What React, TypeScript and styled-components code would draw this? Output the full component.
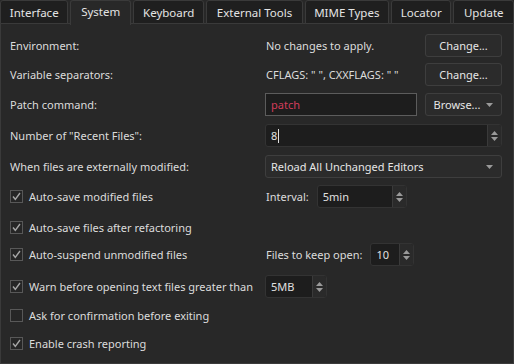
import React from 'react';
import styled, { createGlobalStyle } from 'styled-components';

const Global = createGlobalStyle`
  html, body {
    margin: 0;
    padding: 0;
    background: #282828;
  }
  body {
    font-family: 'Noto Sans', 'DejaVu Sans', sans-serif;
    font-size: 11px;
    color: #dcdcdc;
  }
`;

const Window = styled.div`
  width: 514px;
  height: 364px;
  display: flex;
  flex-direction: column;
  overflow: hidden;
  background: #282828;
`;

const TabBar = styled.div`
  display: flex;
  height: 24px;
  flex: none;
`;

const Tab = styled.div<{ active?: boolean; width: number }>`
  box-sizing: border-box;
  width: ${({ width }) => width}px;
  height: ${({ active }) => (active ? 25 : 24)}px;
  margin-right: 2px;
  display: flex;
  align-items: center;
  justify-content: center;
  font-size: 11.5px;
  padding-bottom: ${({ active }) => (active ? 3 : 0)}px;
  background: ${({ active }) => (active ? '#282828' : '#1f1f1f')};
  border: 1px solid #3a3a3a;
  border-bottom: ${({ active }) => (active ? 'none' : '1px solid #3a3a3a')};
  border-radius: 3px 3px 0 0;
  color: #e4e4e4;
  white-space: nowrap;
  position: relative;
  z-index: ${({ active }) => (active ? 2 : 1)};
  &:last-child {
    margin-right: 0;
  }
`;

const Pane = styled.div`
  flex: 1;
  box-sizing: border-box;
  margin-top: -1px;
  border: 1px solid #3a3a3a;
  padding: 10px 11px 0 9px;
  display: flex;
  flex-direction: column;
`;

const Row = styled.div<{ space: number }>`
  display: grid;
  grid-template-columns: 255px 1fr;
  align-items: center;
  height: 23px;
  margin-top: ${({ space }) => space}px;
`;

const Label = styled.div`
  white-space: nowrap;
`;

const Field = styled.div`
  display: flex;
  align-items: center;
  gap: 8px;
  min-width: 0;
`;

const Note = styled.div`
  flex: 1;
  padding-left: 1px;
  white-space: nowrap;
`;

const Button = styled.div`
  box-sizing: border-box;
  width: 77px;
  height: 23px;
  flex: none;
  display: flex;
  align-items: center;
  justify-content: center;
  gap: 6px;
  background: #2b2b2b;
  border: 1px solid #3e3e3e;
  border-radius: 3px;
  color: #e6e6e6;
`;

const Input = styled.div<{ focus?: boolean }>`
  box-sizing: border-box;
  flex: 1;
  height: 23px;
  display: flex;
  align-items: center;
  padding-left: 5px;
  background: #1d1d1d;
  border: 1px solid ${({ focus }) => (focus ? '#5c5c5c' : '#333333')};
  border-radius: ${({ focus }) => (focus ? 0 : 3)}px;
  color: ${({ focus }) => (focus ? '#d23c5a' : '#e0e0e0')};
`;

const Caret = styled.span`
  display: inline-block;
  width: 1px;
  height: 14px;
  margin-left: 1px;
  background: #e0e0e0;
`;

const Spin = styled.div<{ width?: number }>`
  box-sizing: border-box;
  width: ${({ width }) => (width ? `${width}px` : 'auto')};
  flex: ${({ width }) => (width ? 'none' : 1)};
  height: 23px;
  display: flex;
  background: #1d1d1d;
  border: 1px solid #333333;
  border-radius: 3px;
  overflow: hidden;
`;

const SpinText = styled.div`
  flex: 1;
  display: flex;
  align-items: center;
  padding-left: 5px;
  color: #e0e0e0;
`;

const SpinArrows = styled.div`
  width: 13px;
  flex: none;
  display: flex;
  flex-direction: column;
  align-items: center;
  justify-content: center;
  gap: 2px;
  background: #2a2a2a;
  border-left: 1px solid #3a3a3a;
`;

const Combo = styled.div`
  box-sizing: border-box;
  flex: 1;
  height: 23px;
  display: flex;
  align-items: center;
  justify-content: space-between;
  padding: 0 8px 0 5px;
  background: #2b2b2b;
  border: 1px solid #3e3e3e;
  border-radius: 3px;
  color: #e6e6e6;
`;

const Check = styled.div`
  display: flex;
  align-items: center;
  gap: 6px;
  white-space: nowrap;
`;

const Box = styled.div`
  box-sizing: border-box;
  width: 13px;
  height: 13px;
  flex: none;
  border: 1px solid #585858;
  background: #262626;
  display: flex;
  align-items: center;
  justify-content: center;
`;

const SmallLabel = styled.span`
  white-space: nowrap;
  margin-left: 1px;
`;

const Arrow = ({ up }: { up?: boolean }) => (
  <svg width="7" height="4" viewBox="0 0 7 4">
    <path d={up ? 'M0 4 L3.5 0 L7 4 Z' : 'M0 0 L7 0 L3.5 4 Z'} fill="#9a9a9a" />
  </svg>
);

const SpinBox = ({ value, width, caret }: { value: string; width?: number; caret?: boolean }) => (
  <Spin width={width}>
    <SpinText>
      {value}
      {caret && <Caret />}
    </SpinText>
    <SpinArrows>
      <Arrow up />
      <Arrow />
    </SpinArrows>
  </Spin>
);

const CheckItem = ({ checked, children }: { checked: boolean; children: React.ReactNode }) => (
  <Check>
    <Box>
      {checked && (
        <svg width="11" height="11" viewBox="0 0 11 11">
          <path d="M2 5.5 L4.3 8.3 L9 2" fill="none" stroke="#a6a6a6" strokeWidth="1.4" />
        </svg>
      )}
    </Box>
    {children}
  </Check>
);

const tabs = [
  { name: 'Interface', width: 69 },
  { name: 'System', width: 61, active: true },
  { name: 'Keyboard', width: 72 },
  { name: 'External Tools', width: 97 },
  { name: 'MIME Types', width: 85 },
  { name: 'Locator', width: 61 },
  { name: 'Update', width: 61 },
];

export default function App() {
  return (
    <Window>
      <Global />
      <TabBar>
        {tabs.map((t) => (
          <Tab key={t.name} active={t.active} width={t.width}>
            {t.name}
          </Tab>
        ))}
      </TabBar>
      <Pane>
        <Row space={0}>
          <Label>Environment:</Label>
          <Field>
            <Note>No changes to apply.</Note>
            <Button>Change...</Button>
          </Field>
        </Row>
        <Row space={6}>
          <Label>Variable separators:</Label>
          <Field>
            <Note>CFLAGS: " ", CXXFLAGS: " "</Note>
            <Button>Change...</Button>
          </Field>
        </Row>
        <Row space={7}>
          <Label>Patch command:</Label>
          <Field>
            <Input focus>patch</Input>
            <Button>
              Browse...
              <Arrow />
            </Button>
          </Field>
        </Row>
        <Row space={8}>
          <Label>Number of "Recent Files":</Label>
          <Field>
            <SpinBox value="8" caret />
          </Field>
        </Row>
        <Row space={8}>
          <Label>When files are externally modified:</Label>
          <Field>
            <Combo>
              Reload All Unchanged Editors
              <Arrow />
            </Combo>
          </Field>
        </Row>
        <Row space={7}>
          <CheckItem checked>Auto-save modified files</CheckItem>
          <Field>
            <SmallLabel>Interval:</SmallLabel>
            <SpinBox value="5min" width={90} />
          </Field>
        </Row>
        <Row space={8}>
          <CheckItem checked>Auto-save files after refactoring</CheckItem>
        </Row>
        <Row space={4}>
          <CheckItem checked>Auto-suspend unmodified files</CheckItem>
          <Field>
            <SmallLabel>Files to keep open:</SmallLabel>
            <SpinBox value="10" width={44} />
          </Field>
        </Row>
        <Row space={9}>
          <CheckItem checked>Warn before opening text files greater than</CheckItem>
          <Field>
            <SpinBox value="5MB" width={62} />
          </Field>
        </Row>
        <Row space={6}>
          <CheckItem checked={false}>Ask for confirmation before exiting</CheckItem>
        </Row>
        <Row space={5}>
          <CheckItem checked>Enable crash reporting</CheckItem>
        </Row>
      </Pane>
    </Window>
  );
}
